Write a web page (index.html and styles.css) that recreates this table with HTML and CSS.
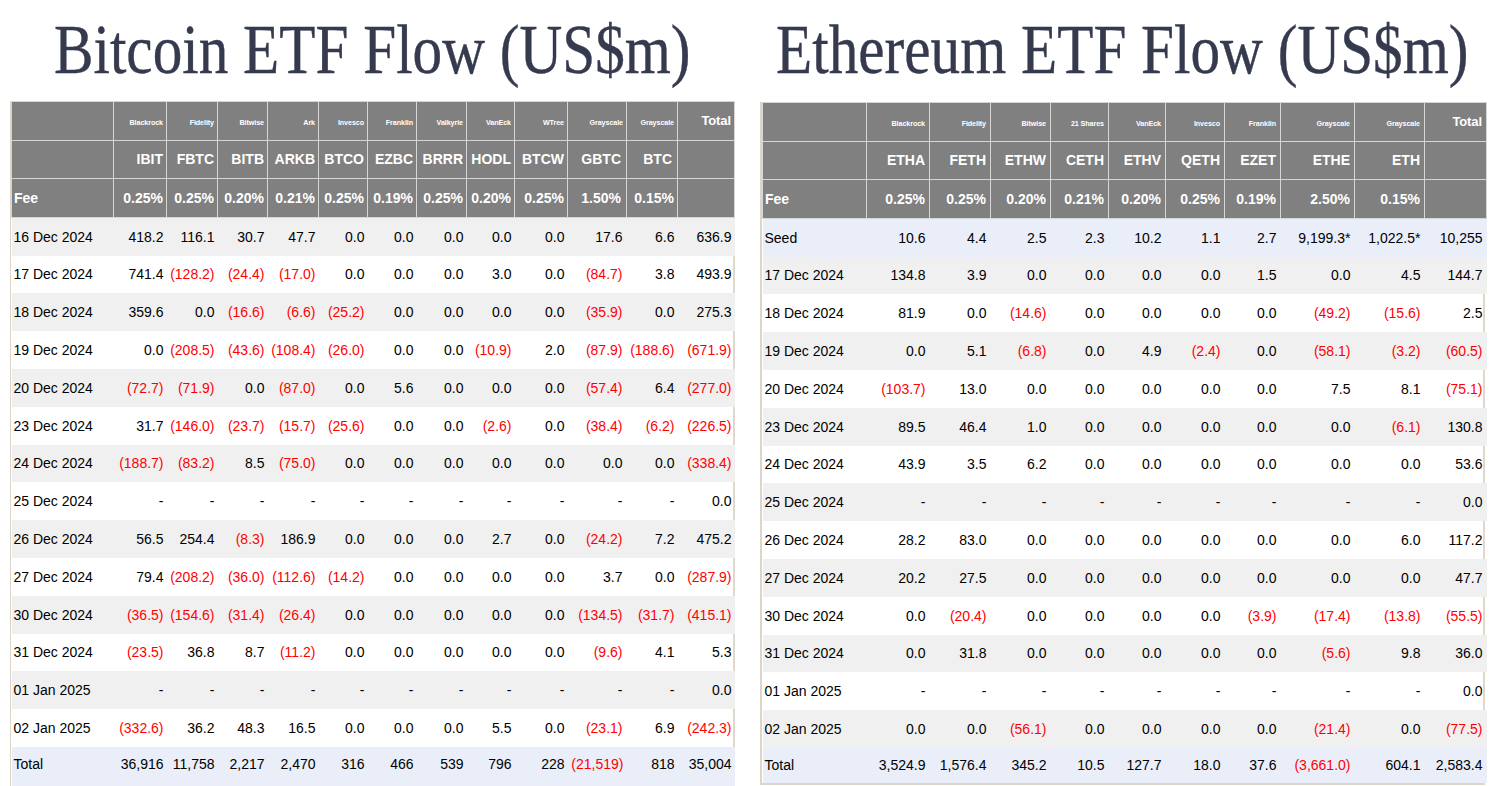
FILE: index.html
```html
<!DOCTYPE html>
<html>
<head>
<meta charset="utf-8">
<link rel="stylesheet" href="styles.css">
</head>
<body>
<div class="page">
  <section class="panel btc">
    <h1 class="title"><span>Bitcoin ETF Flow (US$m)</span></h1>
    <div class="tablebox">
      <table>
        <colgroup><col><col><col><col><col><col><col><col><col><col><col><col><col></colgroup>
        <thead>
          <tr class="prov"><th></th><th>Blackrock</th><th>Fidelity</th><th>Bitwise</th><th>Ark</th><th>Invesco</th><th>Franklin</th><th>Valkyrie</th><th>VanEck</th><th>WTree</th><th>Grayscale</th><th>Grayscale</th><th class="tot">Total</th></tr>
          <tr class="tick"><th></th><th>IBIT</th><th>FBTC</th><th>BITB</th><th>ARKB</th><th>BTCO</th><th>EZBC</th><th>BRRR</th><th>HODL</th><th>BTCW</th><th class="wide">GBTC</th><th class="wide">BTC</th><th></th></tr>
          <tr class="fee"><th>Fee</th><th>0.25%</th><th>0.25%</th><th>0.20%</th><th>0.21%</th><th>0.25%</th><th>0.19%</th><th>0.25%</th><th>0.20%</th><th>0.25%</th><th class="wide">1.50%</th><th>0.15%</th><th></th></tr>
        </thead>
        <tbody>
          <tr class="g"><td>16 Dec 2024</td><td>418.2</td><td>116.1</td><td>30.7</td><td>47.7</td><td>0.0</td><td>0.0</td><td>0.0</td><td>0.0</td><td>0.0</td><td class="wide">17.6</td><td>6.6</td><td>636.9</td></tr>
          <tr><td>17 Dec 2024</td><td>741.4</td><td class="n">(128.2)</td><td class="n">(24.4)</td><td class="n">(17.0)</td><td>0.0</td><td>0.0</td><td>0.0</td><td>3.0</td><td>0.0</td><td class="n wide">(84.7)</td><td>3.8</td><td>493.9</td></tr>
          <tr class="g"><td>18 Dec 2024</td><td>359.6</td><td>0.0</td><td class="n">(16.6)</td><td class="n">(6.6)</td><td class="n">(25.2)</td><td>0.0</td><td>0.0</td><td>0.0</td><td>0.0</td><td class="n wide">(35.9)</td><td>0.0</td><td>275.3</td></tr>
          <tr><td>19 Dec 2024</td><td>0.0</td><td class="n">(208.5)</td><td class="n">(43.6)</td><td class="n">(108.4)</td><td class="n">(26.0)</td><td>0.0</td><td>0.0</td><td class="n">(10.9)</td><td>2.0</td><td class="n wide">(87.9)</td><td class="n">(188.6)</td><td class="n">(671.9)</td></tr>
          <tr class="g"><td>20 Dec 2024</td><td class="n">(72.7)</td><td class="n">(71.9)</td><td>0.0</td><td class="n">(87.0)</td><td>0.0</td><td>5.6</td><td>0.0</td><td>0.0</td><td>0.0</td><td class="n wide">(57.4)</td><td>6.4</td><td class="n">(277.0)</td></tr>
          <tr><td>23 Dec 2024</td><td>31.7</td><td class="n">(146.0)</td><td class="n">(23.7)</td><td class="n">(15.7)</td><td class="n">(25.6)</td><td>0.0</td><td>0.0</td><td class="n">(2.6)</td><td>0.0</td><td class="n wide">(38.4)</td><td class="n">(6.2)</td><td class="n">(226.5)</td></tr>
          <tr class="g"><td>24 Dec 2024</td><td class="n">(188.7)</td><td class="n">(83.2)</td><td>8.5</td><td class="n">(75.0)</td><td>0.0</td><td>0.0</td><td>0.0</td><td>0.0</td><td>0.0</td><td class="wide">0.0</td><td>0.0</td><td class="n">(338.4)</td></tr>
          <tr><td>25 Dec 2024</td><td>-</td><td>-</td><td>-</td><td>-</td><td>-</td><td>-</td><td>-</td><td>-</td><td>-</td><td class="wide">-</td><td>-</td><td>0.0</td></tr>
          <tr class="g"><td>26 Dec 2024</td><td>56.5</td><td>254.4</td><td class="n">(8.3)</td><td>186.9</td><td>0.0</td><td>0.0</td><td>0.0</td><td>2.7</td><td>0.0</td><td class="n wide">(24.2)</td><td>7.2</td><td>475.2</td></tr>
          <tr><td>27 Dec 2024</td><td>79.4</td><td class="n">(208.2)</td><td class="n">(36.0)</td><td class="n">(112.6)</td><td class="n">(14.2)</td><td>0.0</td><td>0.0</td><td>0.0</td><td>0.0</td><td class="wide">3.7</td><td>0.0</td><td class="n">(287.9)</td></tr>
          <tr class="g"><td>30 Dec 2024</td><td class="n">(36.5)</td><td class="n">(154.6)</td><td class="n">(31.4)</td><td class="n">(26.4)</td><td>0.0</td><td>0.0</td><td>0.0</td><td>0.0</td><td>0.0</td><td class="n wide">(134.5)</td><td class="n">(31.7)</td><td class="n">(415.1)</td></tr>
          <tr><td>31 Dec 2024</td><td class="n">(23.5)</td><td>36.8</td><td>8.7</td><td class="n">(11.2)</td><td>0.0</td><td>0.0</td><td>0.0</td><td>0.0</td><td>0.0</td><td class="n wide">(9.6)</td><td>4.1</td><td>5.3</td></tr>
          <tr class="g"><td>01 Jan 2025</td><td>-</td><td>-</td><td>-</td><td>-</td><td>-</td><td>-</td><td>-</td><td>-</td><td>-</td><td class="wide">-</td><td>-</td><td>0.0</td></tr>
          <tr><td>02 Jan 2025</td><td class="n">(332.6)</td><td>36.2</td><td>48.3</td><td>16.5</td><td>0.0</td><td>0.0</td><td>0.0</td><td>5.5</td><td>0.0</td><td class="n wide">(23.1)</td><td>6.9</td><td class="n">(242.3)</td></tr>
          <tr class="b total"><td>Total</td><td>36,916</td><td>11,758</td><td>2,217</td><td>2,470</td><td>316</td><td>466</td><td>539</td><td>796</td><td>228</td><td class="n">(21,519)</td><td>818</td><td>35,004</td></tr>
        </tbody>
      </table>
    </div>
  </section>

  <section class="panel eth">
    <h1 class="title"><span>Ethereum ETF Flow (US$m)</span></h1>
    <div class="tablebox">
      <table>
        <colgroup><col><col><col><col><col><col><col><col><col><col><col></colgroup>
        <thead>
          <tr class="prov"><th></th><th>Blackrock</th><th>Fidelity</th><th>Bitwise</th><th>21 Shares</th><th>VanEck</th><th>Invesco</th><th>Franklin</th><th>Grayscale</th><th>Grayscale</th><th class="tot">Total</th></tr>
          <tr class="tick"><th></th><th>ETHA</th><th>FETH</th><th>ETHW</th><th>CETH</th><th>ETHV</th><th>QETH</th><th>EZET</th><th>ETHE</th><th>ETH</th><th></th></tr>
          <tr class="fee"><th>Fee</th><th>0.25%</th><th>0.25%</th><th>0.20%</th><th>0.21%</th><th>0.20%</th><th>0.25%</th><th>0.19%</th><th>2.50%</th><th>0.15%</th><th></th></tr>
        </thead>
        <tbody>
          <tr class="b"><td>Seed</td><td>10.6</td><td>4.4</td><td>2.5</td><td>2.3</td><td>10.2</td><td>1.1</td><td>2.7</td><td>9,199.3*</td><td>1,022.5*</td><td>10,255</td></tr>
          <tr class="g"><td>17 Dec 2024</td><td>134.8</td><td>3.9</td><td>0.0</td><td>0.0</td><td>0.0</td><td>0.0</td><td>1.5</td><td>0.0</td><td>4.5</td><td>144.7</td></tr>
          <tr><td>18 Dec 2024</td><td>81.9</td><td>0.0</td><td class="n">(14.6)</td><td>0.0</td><td>0.0</td><td>0.0</td><td>0.0</td><td class="n">(49.2)</td><td class="n">(15.6)</td><td>2.5</td></tr>
          <tr class="g"><td>19 Dec 2024</td><td>0.0</td><td>5.1</td><td class="n">(6.8)</td><td>0.0</td><td>4.9</td><td class="n">(2.4)</td><td>0.0</td><td class="n">(58.1)</td><td class="n">(3.2)</td><td class="n">(60.5)</td></tr>
          <tr><td>20 Dec 2024</td><td class="n">(103.7)</td><td>13.0</td><td>0.0</td><td>0.0</td><td>0.0</td><td>0.0</td><td>0.0</td><td>7.5</td><td>8.1</td><td class="n">(75.1)</td></tr>
          <tr class="g"><td>23 Dec 2024</td><td>89.5</td><td>46.4</td><td>1.0</td><td>0.0</td><td>0.0</td><td>0.0</td><td>0.0</td><td>0.0</td><td class="n">(6.1)</td><td>130.8</td></tr>
          <tr><td>24 Dec 2024</td><td>43.9</td><td>3.5</td><td>6.2</td><td>0.0</td><td>0.0</td><td>0.0</td><td>0.0</td><td>0.0</td><td>0.0</td><td>53.6</td></tr>
          <tr class="g"><td>25 Dec 2024</td><td>-</td><td>-</td><td>-</td><td>-</td><td>-</td><td>-</td><td>-</td><td>-</td><td>-</td><td>0.0</td></tr>
          <tr><td>26 Dec 2024</td><td>28.2</td><td>83.0</td><td>0.0</td><td>0.0</td><td>0.0</td><td>0.0</td><td>0.0</td><td>0.0</td><td>6.0</td><td>117.2</td></tr>
          <tr class="g"><td>27 Dec 2024</td><td>20.2</td><td>27.5</td><td>0.0</td><td>0.0</td><td>0.0</td><td>0.0</td><td>0.0</td><td>0.0</td><td>0.0</td><td>47.7</td></tr>
          <tr><td>30 Dec 2024</td><td>0.0</td><td class="n">(20.4)</td><td>0.0</td><td>0.0</td><td>0.0</td><td>0.0</td><td class="n">(3.9)</td><td class="n">(17.4)</td><td class="n">(13.8)</td><td class="n">(55.5)</td></tr>
          <tr class="g"><td>31 Dec 2024</td><td>0.0</td><td>31.8</td><td>0.0</td><td>0.0</td><td>0.0</td><td>0.0</td><td>0.0</td><td class="n">(5.6)</td><td>9.8</td><td>36.0</td></tr>
          <tr><td>01 Jan 2025</td><td>-</td><td>-</td><td>-</td><td>-</td><td>-</td><td>-</td><td>-</td><td>-</td><td>-</td><td>0.0</td></tr>
          <tr class="g"><td>02 Jan 2025</td><td>0.0</td><td>0.0</td><td class="n">(56.1)</td><td>0.0</td><td>0.0</td><td>0.0</td><td>0.0</td><td class="n">(21.4)</td><td>0.0</td><td class="n">(77.5)</td></tr>
          <tr class="b etotal"><td>Total</td><td>3,524.9</td><td>1,576.4</td><td>345.2</td><td>10.5</td><td>127.7</td><td>18.0</td><td>37.6</td><td class="n">(3,661.0)</td><td>604.1</td><td>2,583.4</td></tr>
        </tbody>
      </table>
    </div>
    <div class="nextbox"></div>
  </section>
</div>
</body>
</html>
```

FILE: styles.css
```css
html, body {
  margin: 0;
  padding: 0;
  background: #ffffff;
}

body {
  font-family: "Liberation Sans", Arial, sans-serif;
  color: #000;
  overflow: hidden;
  height: 786px;
}

.page {
  display: flex;
  gap: 25px;
  padding: 0 10px;
  align-items: flex-start;
}

.panel {
  width: 725px;
  flex: none;
}

.title {
  margin: 0;
  height: 101px;
  display: flex;
  justify-content: center;
  align-items: flex-start;
  box-sizing: border-box;
  font-family: "Liberation Serif", "Times New Roman", serif;
  font-weight: normal;
  font-size: 70px;
  line-height: 99px;
  color: #353a4e;
  white-space: nowrap;
}

.title span {
  display: block;
  flex: none;
  transform: scaleX(0.846);
  transform-origin: center;
  -webkit-text-stroke: 0.4px #353a4e;
}

.eth .title {
  height: 102px;
}

.tablebox {
  border-left: 1px solid #ddd6c8;
  border-right: 2px solid #e0d9cb;
}

.eth .tablebox {
  border-left: 2px solid #ddd6c8;
  border-right: 2px solid #e0d9cb;
  border-bottom: 2px solid #ddd6c8;
}

.nextbox {
  margin-top: 3px;
  height: 10px;
  border: 1px solid #ddd6c8;
  border-bottom: none;
}

table {
  width: 100%;
  border-collapse: collapse;
  table-layout: fixed;
}

th {
  background: #808080;
  color: #ffffff;
  border: 1px solid #d6d6d6;
  text-align: right;
  padding: 0 3px;
  font-weight: bold;
  white-space: nowrap;
  overflow: hidden;
}

thead tr {
  height: 38.6px;
}

.prov th {
  font-size: 7.2px;
  letter-spacing: -0.1px;
  padding-top: 4px;
}

.prov th.tot {
  font-size: 13px;
  padding-top: 0;
  vertical-align: middle;
}

.tick th,
.fee th {
  font-size: 14px;
}

.fee th:first-child {
  text-align: left;
  padding-left: 2px;
}

th.wide {
  padding-right: 5px;
}

td {
  font-size: 14px;
  text-align: right;
  padding: 0 3px;
  height: 37.8px;
  white-space: nowrap;
  border: none;
}

td:first-child {
  text-align: left;
  padding-left: 2px;
}

td.wide {
  padding-right: 4px;
}

tr.g td {
  background: #f0f0f0;
}

tr.b td {
  background: #e9eef8;
}

tr.total td {
  height: 34px;
  padding-bottom: 8px;
}

tr.etotal td {
  height: 35px;
}

td.n {
  color: #ff0000;
}

/* Bitcoin column widths */
.btc col:nth-child(1) { width: 102px; }
.btc col:nth-child(2) { width: 53px; }
.btc col:nth-child(3) { width: 51px; }
.btc col:nth-child(4) { width: 50px; }
.btc col:nth-child(5) { width: 51px; }
.btc col:nth-child(6) { width: 49px; }
.btc col:nth-child(7) { width: 49px; }
.btc col:nth-child(8) { width: 50px; }
.btc col:nth-child(9) { width: 48px; }
.btc col:nth-child(10) { width: 53px; }
.btc col:nth-child(11) { width: 59px; }
.btc col:nth-child(12) { width: 51px; }
.btc col:nth-child(13) { width: 57px; }

/* Ethereum column widths */
.eth col:nth-child(1) { width: 104px; }
.eth col:nth-child(2) { width: 63px; }
.eth col:nth-child(3) { width: 61px; }
.eth col:nth-child(4) { width: 60px; }
.eth col:nth-child(5) { width: 58px; }
.eth col:nth-child(6) { width: 57px; }
.eth col:nth-child(7) { width: 59px; }
.eth col:nth-child(8) { width: 56px; }
.eth col:nth-child(9) { width: 74px; }
.eth col:nth-child(10) { width: 70px; }
.eth col:nth-child(11) { width: 62px; }

.eth th,
.eth td {
  padding-right: 4px;
}

.eth td:first-child {
  padding-left: 2px;
}
```
